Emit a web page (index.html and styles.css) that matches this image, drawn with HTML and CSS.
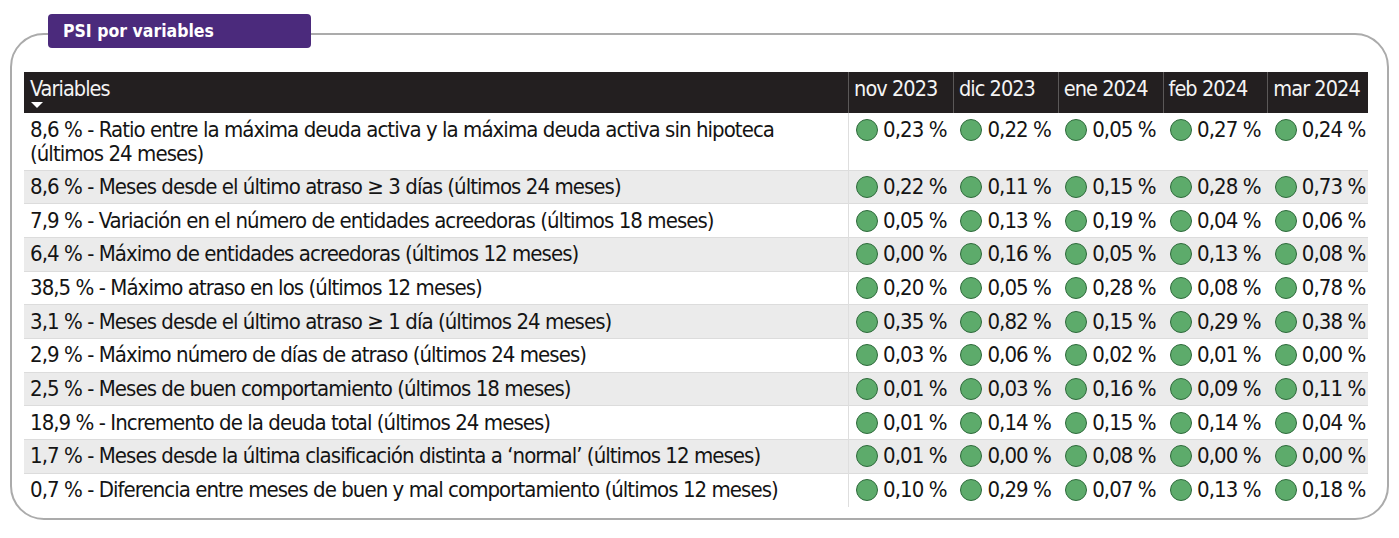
FILE: index.html
```html
<!DOCTYPE html>
<html lang="es">
<head>
<meta charset="utf-8">
<title>PSI por variables</title>
<link rel="stylesheet" href="styles.css">
</head>
<body>
<div class="panel">
  <div class="tab">PSI por variables</div>
  <div class="box">
    <table class="grid">
      <colgroup>
        <col class="c-var"><col class="c-m"><col class="c-m"><col class="c-m"><col class="c-m"><col class="c-last">
      </colgroup>
      <thead>
        <tr>
          <th class="h-var"><span class="h-label">Variables</span><span class="sort"></span></th>
          <th>nov 2023</th><th>dic 2023</th><th>ene 2024</th><th>feb 2024</th><th>mar 2024</th>
        </tr>
      </thead>
      <tbody>
        <tr class="tall">
          <td class="var">8,6 % - Ratio entre la máxima deuda activa y la máxima deuda activa sin hipoteca (últimos 24 meses)</td>
          <td><span class="dot"></span>0,23 %</td><td><span class="dot"></span>0,22 %</td><td><span class="dot"></span>0,05 %</td><td><span class="dot"></span>0,27 %</td><td><span class="dot"></span>0,24 %</td>
        </tr>
        <tr class="alt">
          <td class="var">8,6 % - Meses desde el último atraso ≥ 3 días (últimos 24 meses)</td>
          <td><span class="dot"></span>0,22 %</td><td><span class="dot"></span>0,11 %</td><td><span class="dot"></span>0,15 %</td><td><span class="dot"></span>0,28 %</td><td><span class="dot"></span>0,73 %</td>
        </tr>
        <tr>
          <td class="var">7,9 % - Variación en el número de entidades acreedoras (últimos 18 meses)</td>
          <td><span class="dot"></span>0,05 %</td><td><span class="dot"></span>0,13 %</td><td><span class="dot"></span>0,19 %</td><td><span class="dot"></span>0,04 %</td><td><span class="dot"></span>0,06 %</td>
        </tr>
        <tr class="alt">
          <td class="var">6,4 % - Máximo de entidades acreedoras (últimos 12 meses)</td>
          <td><span class="dot"></span>0,00 %</td><td><span class="dot"></span>0,16 %</td><td><span class="dot"></span>0,05 %</td><td><span class="dot"></span>0,13 %</td><td><span class="dot"></span>0,08 %</td>
        </tr>
        <tr>
          <td class="var">38,5 % - Máximo atraso en los (últimos 12 meses)</td>
          <td><span class="dot"></span>0,20 %</td><td><span class="dot"></span>0,05 %</td><td><span class="dot"></span>0,28 %</td><td><span class="dot"></span>0,08 %</td><td><span class="dot"></span>0,78 %</td>
        </tr>
        <tr class="alt">
          <td class="var">3,1 % - Meses desde el último atraso ≥ 1 día (últimos 24 meses)</td>
          <td><span class="dot"></span>0,35 %</td><td><span class="dot"></span>0,82 %</td><td><span class="dot"></span>0,15 %</td><td><span class="dot"></span>0,29 %</td><td><span class="dot"></span>0,38 %</td>
        </tr>
        <tr>
          <td class="var">2,9 % - Máximo número de días de atraso (últimos 24 meses)</td>
          <td><span class="dot"></span>0,03 %</td><td><span class="dot"></span>0,06 %</td><td><span class="dot"></span>0,02 %</td><td><span class="dot"></span>0,01 %</td><td><span class="dot"></span>0,00 %</td>
        </tr>
        <tr class="alt">
          <td class="var">2,5 % - Meses de buen comportamiento (últimos 18 meses)</td>
          <td><span class="dot"></span>0,01 %</td><td><span class="dot"></span>0,03 %</td><td><span class="dot"></span>0,16 %</td><td><span class="dot"></span>0,09 %</td><td><span class="dot"></span>0,11 %</td>
        </tr>
        <tr>
          <td class="var">18,9 % - Incremento de la deuda total (últimos 24 meses)</td>
          <td><span class="dot"></span>0,01 %</td><td><span class="dot"></span>0,14 %</td><td><span class="dot"></span>0,15 %</td><td><span class="dot"></span>0,14 %</td><td><span class="dot"></span>0,04 %</td>
        </tr>
        <tr class="alt">
          <td class="var">1,7 % - Meses desde la última clasificación distinta a ‘normal’ (últimos 12 meses)</td>
          <td><span class="dot"></span>0,01 %</td><td><span class="dot"></span>0,00 %</td><td><span class="dot"></span>0,08 %</td><td><span class="dot"></span>0,00 %</td><td><span class="dot"></span>0,00 %</td>
        </tr>
        <tr>
          <td class="var">0,7 % - Diferencia entre meses de buen y mal comportamiento (últimos 12 meses)</td>
          <td><span class="dot"></span>0,10 %</td><td><span class="dot"></span>0,29 %</td><td><span class="dot"></span>0,07 %</td><td><span class="dot"></span>0,13 %</td><td><span class="dot"></span>0,18 %</td>
        </tr>
      </tbody>
    </table>
  </div>
</div>
</body>
</html>
```
FILE: styles.css
```css
html, body {
  margin: 0;
  padding: 0;
  background: #ffffff;
}
body {
  font-family: "DejaVu Sans Condensed", "DejaVu Sans", sans-serif;
  color: #141414;
}
.panel {
  position: relative;
  padding: 33px 10px 0 10px;
}
.tab {
  position: absolute;
  left: 48px;
  top: 14px;
  width: 263px;
  height: 34px;
  box-sizing: border-box;
  background: #4b2a7c;
  border-radius: 4px;
  color: #ffffff;
  font-family: "DejaVu Sans Condensed", "DejaVu Sans", sans-serif;
  font-weight: bold;
  font-size: 17.5px;
  line-height: 34px;
  padding-left: 15px;
  z-index: 2;
}
.box {
  height: 487px;
  box-sizing: border-box;
  border: 2px solid #ababab;
  border-radius: 34px;
  padding: 37px 0 0 12px;
}
.grid {
  border-collapse: collapse;
  table-layout: fixed;
  width: 1344px;
  font-size: 22px;
  letter-spacing: -0.95px;
}
.c-var { width: 824px; }
.c-m { width: 104.75px; }
.c-last { width: 100px; }
.grid thead th {
  background: #231f20;
  color: #f4f4f4;
  font-weight: normal;
  font-size: 21.5px;
  text-align: left;
  vertical-align: top;
  height: 41px;
  box-sizing: border-box;
  padding: 4px 0 0 5px;
  line-height: 26px;
  border-left: 1px solid #5b5858;
  white-space: nowrap;
}
.grid thead th.h-var {
  border-left: none;
  position: relative;
  padding-left: 6px;
}
.h-label { display: block; }
.sort {
  position: absolute;
  left: 7px;
  top: 30px;
  width: 0;
  height: 0;
  border-left: 6px solid transparent;
  border-right: 6px solid transparent;
  border-top: 6px solid #ffffff;
}
.grid tbody td {
  height: 33.7px;
  box-sizing: border-box;
  padding: 0 0 0 7px;
  line-height: 24px;
  vertical-align: middle;
  border-top: 1px solid #dcdcdc;
  white-space: nowrap;
}
.grid tbody tr:first-child td { border-top: none; }
.grid tbody td.var {
  padding-left: 6px;
  border-right: 1px solid #dedede;
  white-space: normal;
}
.grid tbody tr.tall td {
  height: 57px;
  vertical-align: top;
  padding-top: 5px;
}
.grid tbody tr.alt td { background: #ebebeb; }
.dot {
  display: inline-block;
  width: 22px;
  height: 22px;
  box-sizing: border-box;
  border-radius: 50%;
  background: #5dab6b;
  border: 1.5px solid #2e6a3b;
  vertical-align: -4px;
  margin-right: 5px;
}
```
